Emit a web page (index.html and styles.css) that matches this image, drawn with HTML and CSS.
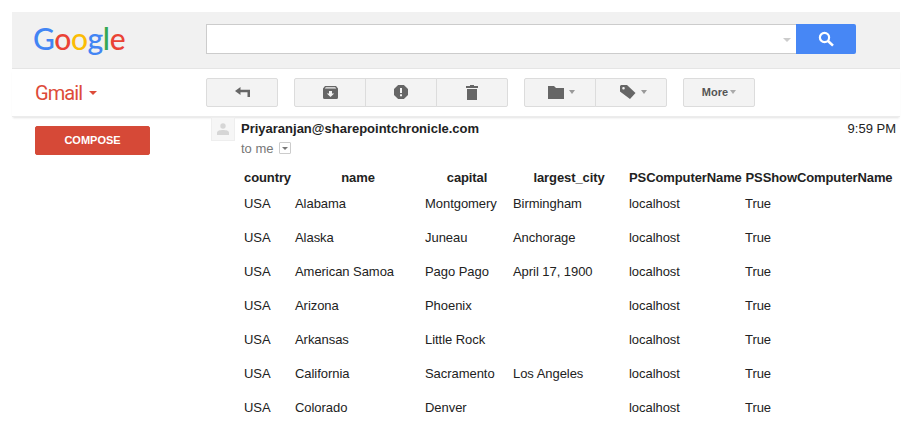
FILE: index.html
```html
<!DOCTYPE html>
<html lang="en">
<head>
<meta charset="utf-8">
<title>Gmail</title>
<link rel="stylesheet" href="styles.css">
</head>
<body>
<div class="page">
  <header class="masthead">
    <div class="logo"><span class="blue">G</span><span class="red">o</span><span class="yellow">o</span><span class="blue">g</span><span class="green">l</span><span class="red">e</span></div>
    <div class="search">
      <div class="search-input"><span class="search-caret"></span></div>
      <div class="search-btn">
        <svg width="18" height="18" viewBox="0 0 18 18"><circle cx="7.5" cy="7.5" r="4.6" fill="none" stroke="#fff" stroke-width="2.2"/><path d="M11 11l5 4.6" stroke="#fff" stroke-width="2.6" fill="none"/></svg>
      </div>
    </div>
  </header>
  <nav class="toolbar">
    <div class="brand">Gmail<span class="brand-caret"></span></div>
    <div class="actions">
      <div class="btn">
        <svg width="15" height="10" viewBox="0 0 15 10"><path d="M0 4L5.500 0v2.800H15V10h-2.500V5.300H5.500V8z" fill="#666"/></svg>
      </div>
      <div class="group">
        <div class="btn">
          <svg width="15" height="13" viewBox="0 0 15 13"><path fill-rule="evenodd" d="M2 0h11l2 2.400V11.500a1.500 1.500 0 0 1-1.500 1.500h-12A1.500 1.500 0 0 1 0 11.500V2.400zM1.800 2.600h11.400L12.200 1.200H2.800zM6 5v2.500H3.800L7.500 11l3.700-3.500H9V5z" fill="#666"/></svg>
        </div>
        <div class="btn">
          <svg width="14" height="14" viewBox="0 0 14 14"><path fill-rule="evenodd" d="M4.100 0h5.800L14 4.100v5.800L9.900 14H4.100L0 9.900V4.100zM6 3v5h2V3zM6 9.200v2h2v-2z" fill="#666"/></svg>
        </div>
        <div class="btn">
          <svg width="12" height="15" viewBox="0 0 12 15"><path d="M4 0h4v1h4v2H0V1h4zM1 4h10v11H1z" fill="#666"/></svg>
        </div>
      </div>
      <div class="group">
        <div class="btn folder">
          <svg width="16" height="13" viewBox="0 0 16 13"><path d="M0 0h6l2 2h8v11H0z" fill="#666"/></svg><span class="caret"></span>
        </div>
        <div class="btn tag">
          <svg width="16" height="14" viewBox="0 0 16 14"><path fill-rule="evenodd" d="M1 0h6l8.500 8-5.500 6L0 6.500V1zM3.500 2a1.300 1.300 0 1 0 0 2.600 1.300 1.300 0 0 0 0-2.600z" fill="#666"/></svg><span class="caret"></span>
        </div>
      </div>
      <div class="btn more">More<span class="caret small"></span></div>
    </div>
  </nav>
  <div class="content">
    <aside class="sidebar"><div class="compose">COMPOSE</div></aside>
    <main class="message">
      <div class="message-head">
        <div class="avatar">
          <svg width="12" height="12" viewBox="0 0 12 12"><circle cx="6" cy="3" r="2.700" fill="#d6d6d6"/><path d="M0 12V9.500C0 7.800 3 7 6 7s6 .8 6 2.500V12z" fill="#d6d6d6"/></svg>
        </div>
        <div class="sender-block">
          <div class="sender-row">
            <span class="sender">Priyaranjan@sharepointchronicle.com</span>
            <span class="time">9:59 PM</span>
          </div>
          <div class="to-me">to me <span class="to-toggle"><span class="to-caret"></span></span></div>
        </div>
      </div>
      <table class="data">
        <thead>
          <tr><th class="c1">country</th><th class="c2">name</th><th class="c3">capital</th><th class="c4">largest_city</th><th class="c5">PSComputerName</th><th class="c6">PSShowComputerName</th></tr>
        </thead>
        <tbody>
          <tr><td>USA</td><td>Alabama</td><td>Montgomery</td><td>Birmingham</td><td>localhost</td><td>True</td></tr>
          <tr><td>USA</td><td>Alaska</td><td>Juneau</td><td>Anchorage</td><td>localhost</td><td>True</td></tr>
          <tr><td>USA</td><td>American Samoa</td><td>Pago Pago</td><td>April 17, 1900</td><td>localhost</td><td>True</td></tr>
          <tr><td>USA</td><td>Arizona</td><td>Phoenix</td><td></td><td>localhost</td><td>True</td></tr>
          <tr><td>USA</td><td>Arkansas</td><td>Little Rock</td><td></td><td>localhost</td><td>True</td></tr>
          <tr><td>USA</td><td>California</td><td>Sacramento</td><td>Los Angeles</td><td>localhost</td><td>True</td></tr>
          <tr><td>USA</td><td>Colorado</td><td>Denver</td><td></td><td>localhost</td><td>True</td></tr>
        </tbody>
      </table>
    </main>
  </div>
</div>
</body>
</html>
```
FILE: styles.css
```css
* { box-sizing: border-box; }
html, body { margin: 0; height: 100%; background: #fff; }
body { overflow: hidden; font-family: "Liberation Sans", Arial, sans-serif; color: #222; }
.page { padding: 12px 11px 0 12px; }

.masthead {
  display: flex;
  align-items: flex-start;
  height: 57px;
  background: #f1f1f1;
  border-bottom: 1px solid #e5e5e5;
  padding: 12px 0 0 21px;
}
.logo {
  width: 173px;
  font-family: Lato, sans-serif;
  font-size: 30px;
  font-weight: 500;
  line-height: 28px;
  letter-spacing: -0.4px;
}
.blue { color: #4285f4; }
.red { color: #ea4335; }
.yellow { color: #fbbc05; }
.green { color: #34a853; }
.search { display: flex; height: 30px; }
.search-input {
  width: 590px;
  background: #fff;
  border: 1px solid #ccc;
  border-right: 0;
  position: relative;
}
.search-caret {
  position: absolute;
  right: 5px;
  top: 13px;
  border: 4px solid transparent;
  border-top: 4px solid #ccc;
  border-bottom: 0;
}
.search-btn {
  width: 60px;
  background: #4787f5;
  border-radius: 0 2px 2px 0;
  display: flex;
  align-items: center;
  justify-content: center;
}

.toolbar {
  display: flex;
  align-items: center;
  height: 48px;
  padding-left: 23px;
  box-shadow: 0 2px 2px -1px #e2e2e2;
  border-bottom: 1px solid #ececec;
}
.brand {
  width: 171px;
  color: #dd4b39;
  font-family: Roboto, sans-serif;
  font-size: 20px;
  letter-spacing: -0.9px;
  display: flex;
  align-items: center;
}
.brand-caret {
  margin-left: 7px;
  margin-top: 1px;
  border: 4px solid transparent;
  border-top: 4px solid #dd4b39;
  border-bottom: 0;
}
.actions { display: flex; gap: 16px; margin-top: -1px; }
.btn {
  width: 72px;
  height: 29px;
  display: flex;
  align-items: center;
  justify-content: center;
  background: #f3f3f3;
  border: 1px solid #dcdcdc;
  border-radius: 2px;
}
.group { display: flex; }
.group .btn { border-radius: 0; margin-left: -1px; }
.group .btn:first-child { margin-left: 0; border-radius: 2px 0 0 2px; }
.group .btn:last-child { border-radius: 0 2px 2px 0; }
.folder { padding-left: 2px; }
.tag { padding-left: 4px; }
.caret {
  margin-left: 5px;
  border: 3.5px solid transparent;
  border-top: 4px solid #999;
  border-bottom: 0;
}
.caret.small { margin-left: 2px; border-top-color: #aaa; }
.more {
  font-size: 11px;
  font-weight: bold;
  color: #555;
}

.content { display: flex; }
.sidebar { width: 194px; padding: 9px 0 0 23px; }
.compose {
  width: 115px;
  height: 29px;
  background: #d64937;
  border: 1px solid #d44b38;
  border-radius: 2px;
  color: #fff;
  font-size: 11px;
  font-weight: bold;
  line-height: 27px;
  text-align: center;
}
.message { flex: 1; min-width: 0; padding-left: 5px; }
.message-head { display: flex; align-items: flex-start; }
.avatar {
  width: 24px;
  height: 24px;
  background: #f6f6f6;
  border: 1px solid #eee;
  display: flex;
  align-items: center;
  justify-content: center;
  flex: none;
}
.sender-block { flex: 1; padding-left: 6px; }
.sender-row {
  display: flex;
  justify-content: space-between;
  align-items: center;
  height: 22px;
  padding-right: 4px;
}
.sender { font-size: 13px; font-weight: bold; color: #222; }
.time { font-size: 13px; color: #222; }
.to-me {
  display: flex;
  align-items: center;
  height: 18px;
  font-size: 13px;
  color: #777;
}
.to-toggle {
  width: 12px;
  height: 12px;
  margin-left: 5px;
  border: 1px solid #ccc;
  border-radius: 1px;
  display: flex;
  align-items: center;
  justify-content: center;
}
.to-caret {
  border: 3px solid transparent;
  border-top: 3px solid #777;
  border-bottom: 0;
}

.data {
  table-layout: fixed;
  border-collapse: separate;
  border-spacing: 2px;
  font-size: 13px;
  color: #222;
  margin: 9px 0 0 30px;
  width: 655px;
  letter-spacing: -0.05px;
}
.data th { padding: 2px 1px 0; height: 17px; font-size: 13px; font-weight: bold; text-align: center; white-space: nowrap; letter-spacing: -0.1px; }
.data td { padding: 1px; height: 32px; white-space: nowrap; }
.c1 { width: 49px; }
.c2 { width: 128px; }
.c3 { width: 86px; }
.c4 { width: 114px; }
.c5 { width: 114px; }
.c6 { width: 150px; }
```
